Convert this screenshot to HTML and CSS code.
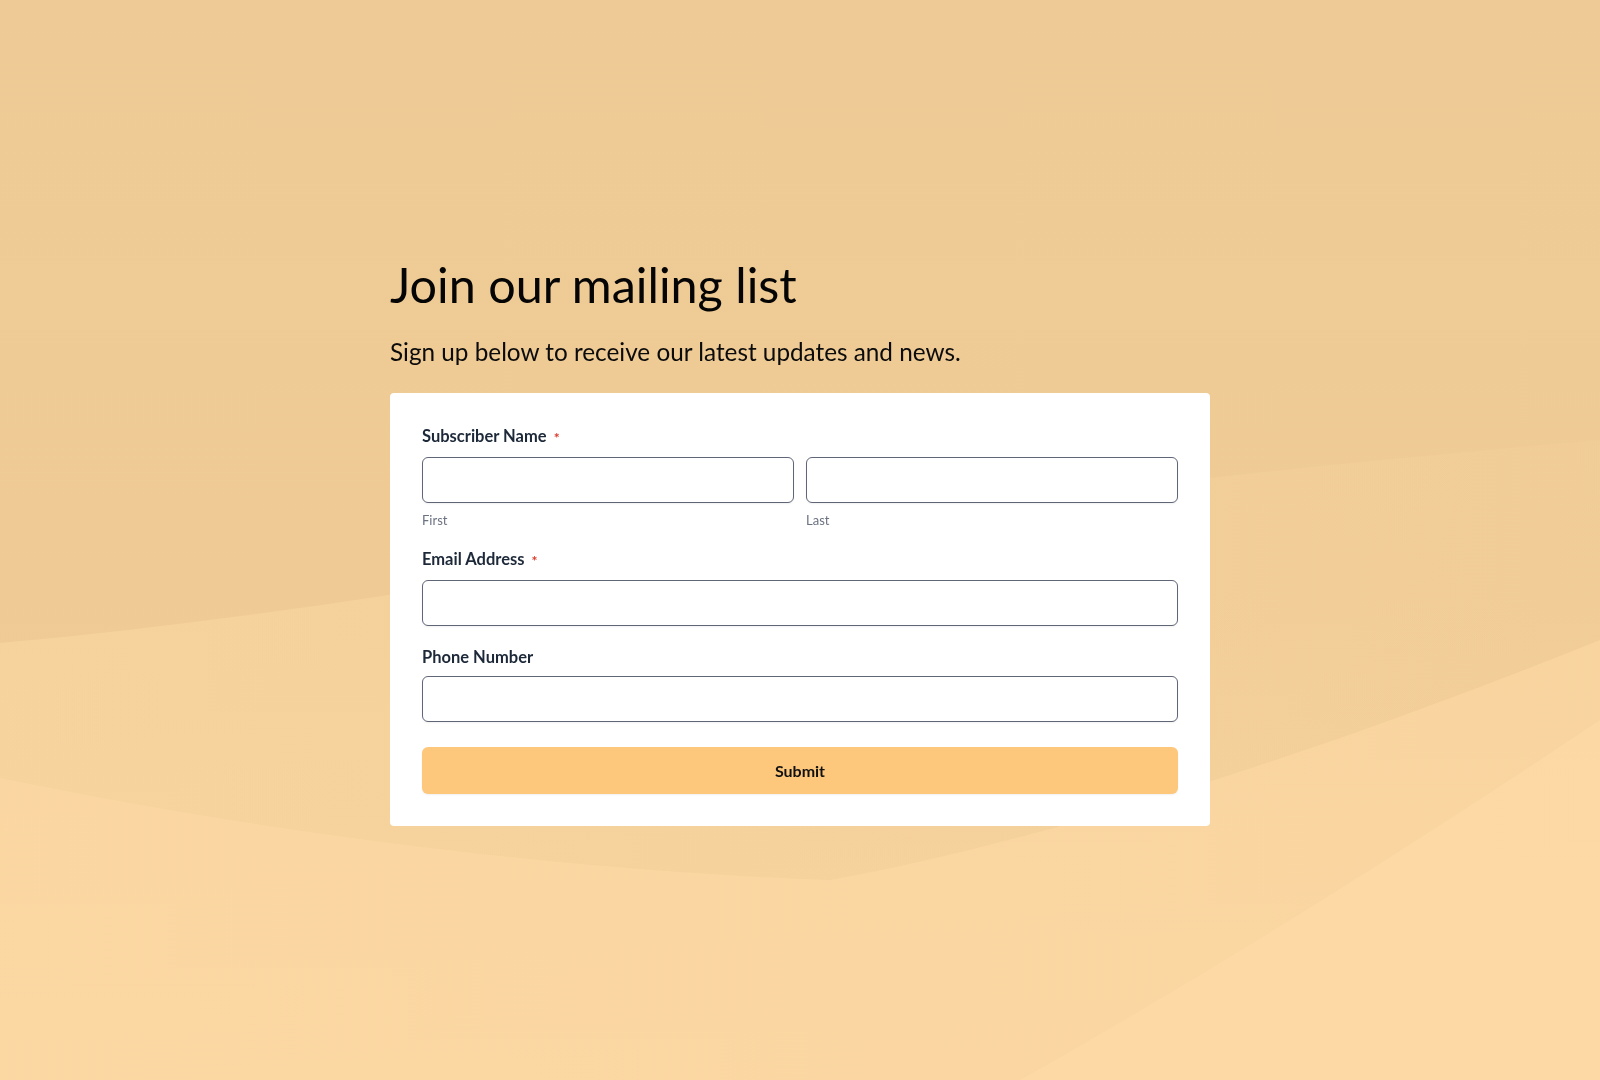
FILE: index.html
```html
<!DOCTYPE html>
<html lang="en">
<head>
    <meta charset="UTF-8">
    <meta name="viewport" content="width=device-width, initial-scale=1.0">
    <title>Join our mailing list</title>
    <link rel="stylesheet" href="styles.css">
</head>
<body>
    <!-- decorative background waves -->
    <div class="backdrop">
        <svg viewBox="0 0 1600 1080" preserveAspectRatio="none" width="100%" height="100%">
            <defs>
                <linearGradient id="bg" x1="0" y1="0" x2="0" y2="1">
                    <stop offset="0" stop-color="#eecb96"/>
                    <stop offset="0.55" stop-color="#efca94"/>
                    <stop offset="1" stop-color="#f5d19c"/>
                </linearGradient>
                <linearGradient id="wave1" x1="0" y1="0" x2="1" y2="0">
                    <stop offset="0" stop-color="#fad7a2" stop-opacity="0.6"/>
                    <stop offset="0.7" stop-color="#fad7a2" stop-opacity="0.3"/>
                    <stop offset="1" stop-color="#fad7a2" stop-opacity="0.15"/>
                </linearGradient>
            </defs>
            <rect width="1600" height="1080" fill="url(#bg)"/>
            <path d="M0,643 C200,625 400,595 600,560 C900,510 1250,470 1600,440 V1080 H0 Z" fill="url(#wave1)"/>
            <path d="M0,778 C300,840 600,872 830,880 C1100,830 1400,720 1600,640 V1080 H0 Z" fill="#fdd9a5" opacity="0.6"/>
            <path d="M1020,1080 C1250,950 1450,820 1600,720 V1080 Z" fill="#fddaa7" opacity="0.7"/>
        </svg>
    </div>

    <main class="page">
        <h1 class="title">Join our mailing list</h1>
        <p class="lead">Sign up below to receive our latest updates and news.</p>

        <form class="card">
            <div class="field">
                <label class="label">Subscriber Name <span class="req">*</span></label>
                <div class="name-row">
                    <div>
                        <input type="text" class="input" id="first">
                        <div class="hint">First</div>
                    </div>
                    <div>
                        <input type="text" class="input" id="last">
                        <div class="hint">Last</div>
                    </div>
                </div>
            </div>

            <div class="field">
                <label class="label" for="email">Email Address <span class="req">*</span></label>
                <input type="email" class="input" id="email">
            </div>

            <div class="field">
                <label class="label" for="phone">Phone Number</label>
                <input type="tel" class="input" id="phone">
            </div>

            <button type="button" class="submit">Submit</button>
        </form>
    </main>
</body>
</html>
```

FILE: styles.css
```css
* {
    box-sizing: border-box;
}
body {
    margin: 0;
    font-family: Lato, "Open Sans", sans-serif;
    color: #000;
    background: #eecb96;
}
.backdrop {
    position: fixed;
    top: 0;
    left: 0;
    width: 100%;
    height: 100%;
    z-index: 0;
}
.backdrop svg {
    display: block;
}
.page {
    position: relative;
    z-index: 1;
    min-height: 100vh;
    width: 820px;
    margin: 0 auto;
    display: flex;
    flex-direction: column;
    justify-content: center;
}
.title {
    margin: 0;
    font-size: 48.5px;
    font-weight: 400;
    line-height: 60px;
    color: #050505;
}
.lead {
    margin: 23px 0 27px;
    font-size: 24.3px;
    line-height: 29px;
    color: #0b0b0b;
}
.card {
    background: #fff;
    border-radius: 4px;
    padding: 32px;
    display: flex;
    flex-direction: column;
    gap: 20px;
}
.label {
    display: block;
    font-size: 16.5px;
    line-height: 22px;
    font-weight: 700;
    color: #1d2939;
    margin-bottom: 8px;
}
.req {
    color: #d83a2b;
    font-size: 14px;
    margin-left: 3px;
    vertical-align: -1px;
}
.name-row {
    display: grid;
    grid-template-columns: 1fr 1fr;
    gap: 12px;
}
.input {
    display: block;
    width: 100%;
    height: 46px;
    border: 1px solid #5f6676;
    border-radius: 6px;
    background: #fff;
    box-shadow: 0 1px 2px rgba(16, 24, 40, 0.06);
    font-family: inherit;
    font-size: 16px;
    padding: 0 12px;
}
.hint {
    margin-top: 9px;
    font-size: 13px;
    line-height: 16px;
    color: #6b7280;
}
.submit {
    margin-top: 5px;
    height: 47px;
    border: none;
    border-radius: 6px;
    background: #fec87c;
    box-shadow: 0 1px 2px rgba(16, 24, 40, 0.06);
    font-family: inherit;
    font-size: 16px;
    font-weight: 700;
    color: #111;
    cursor: pointer;
}
```
